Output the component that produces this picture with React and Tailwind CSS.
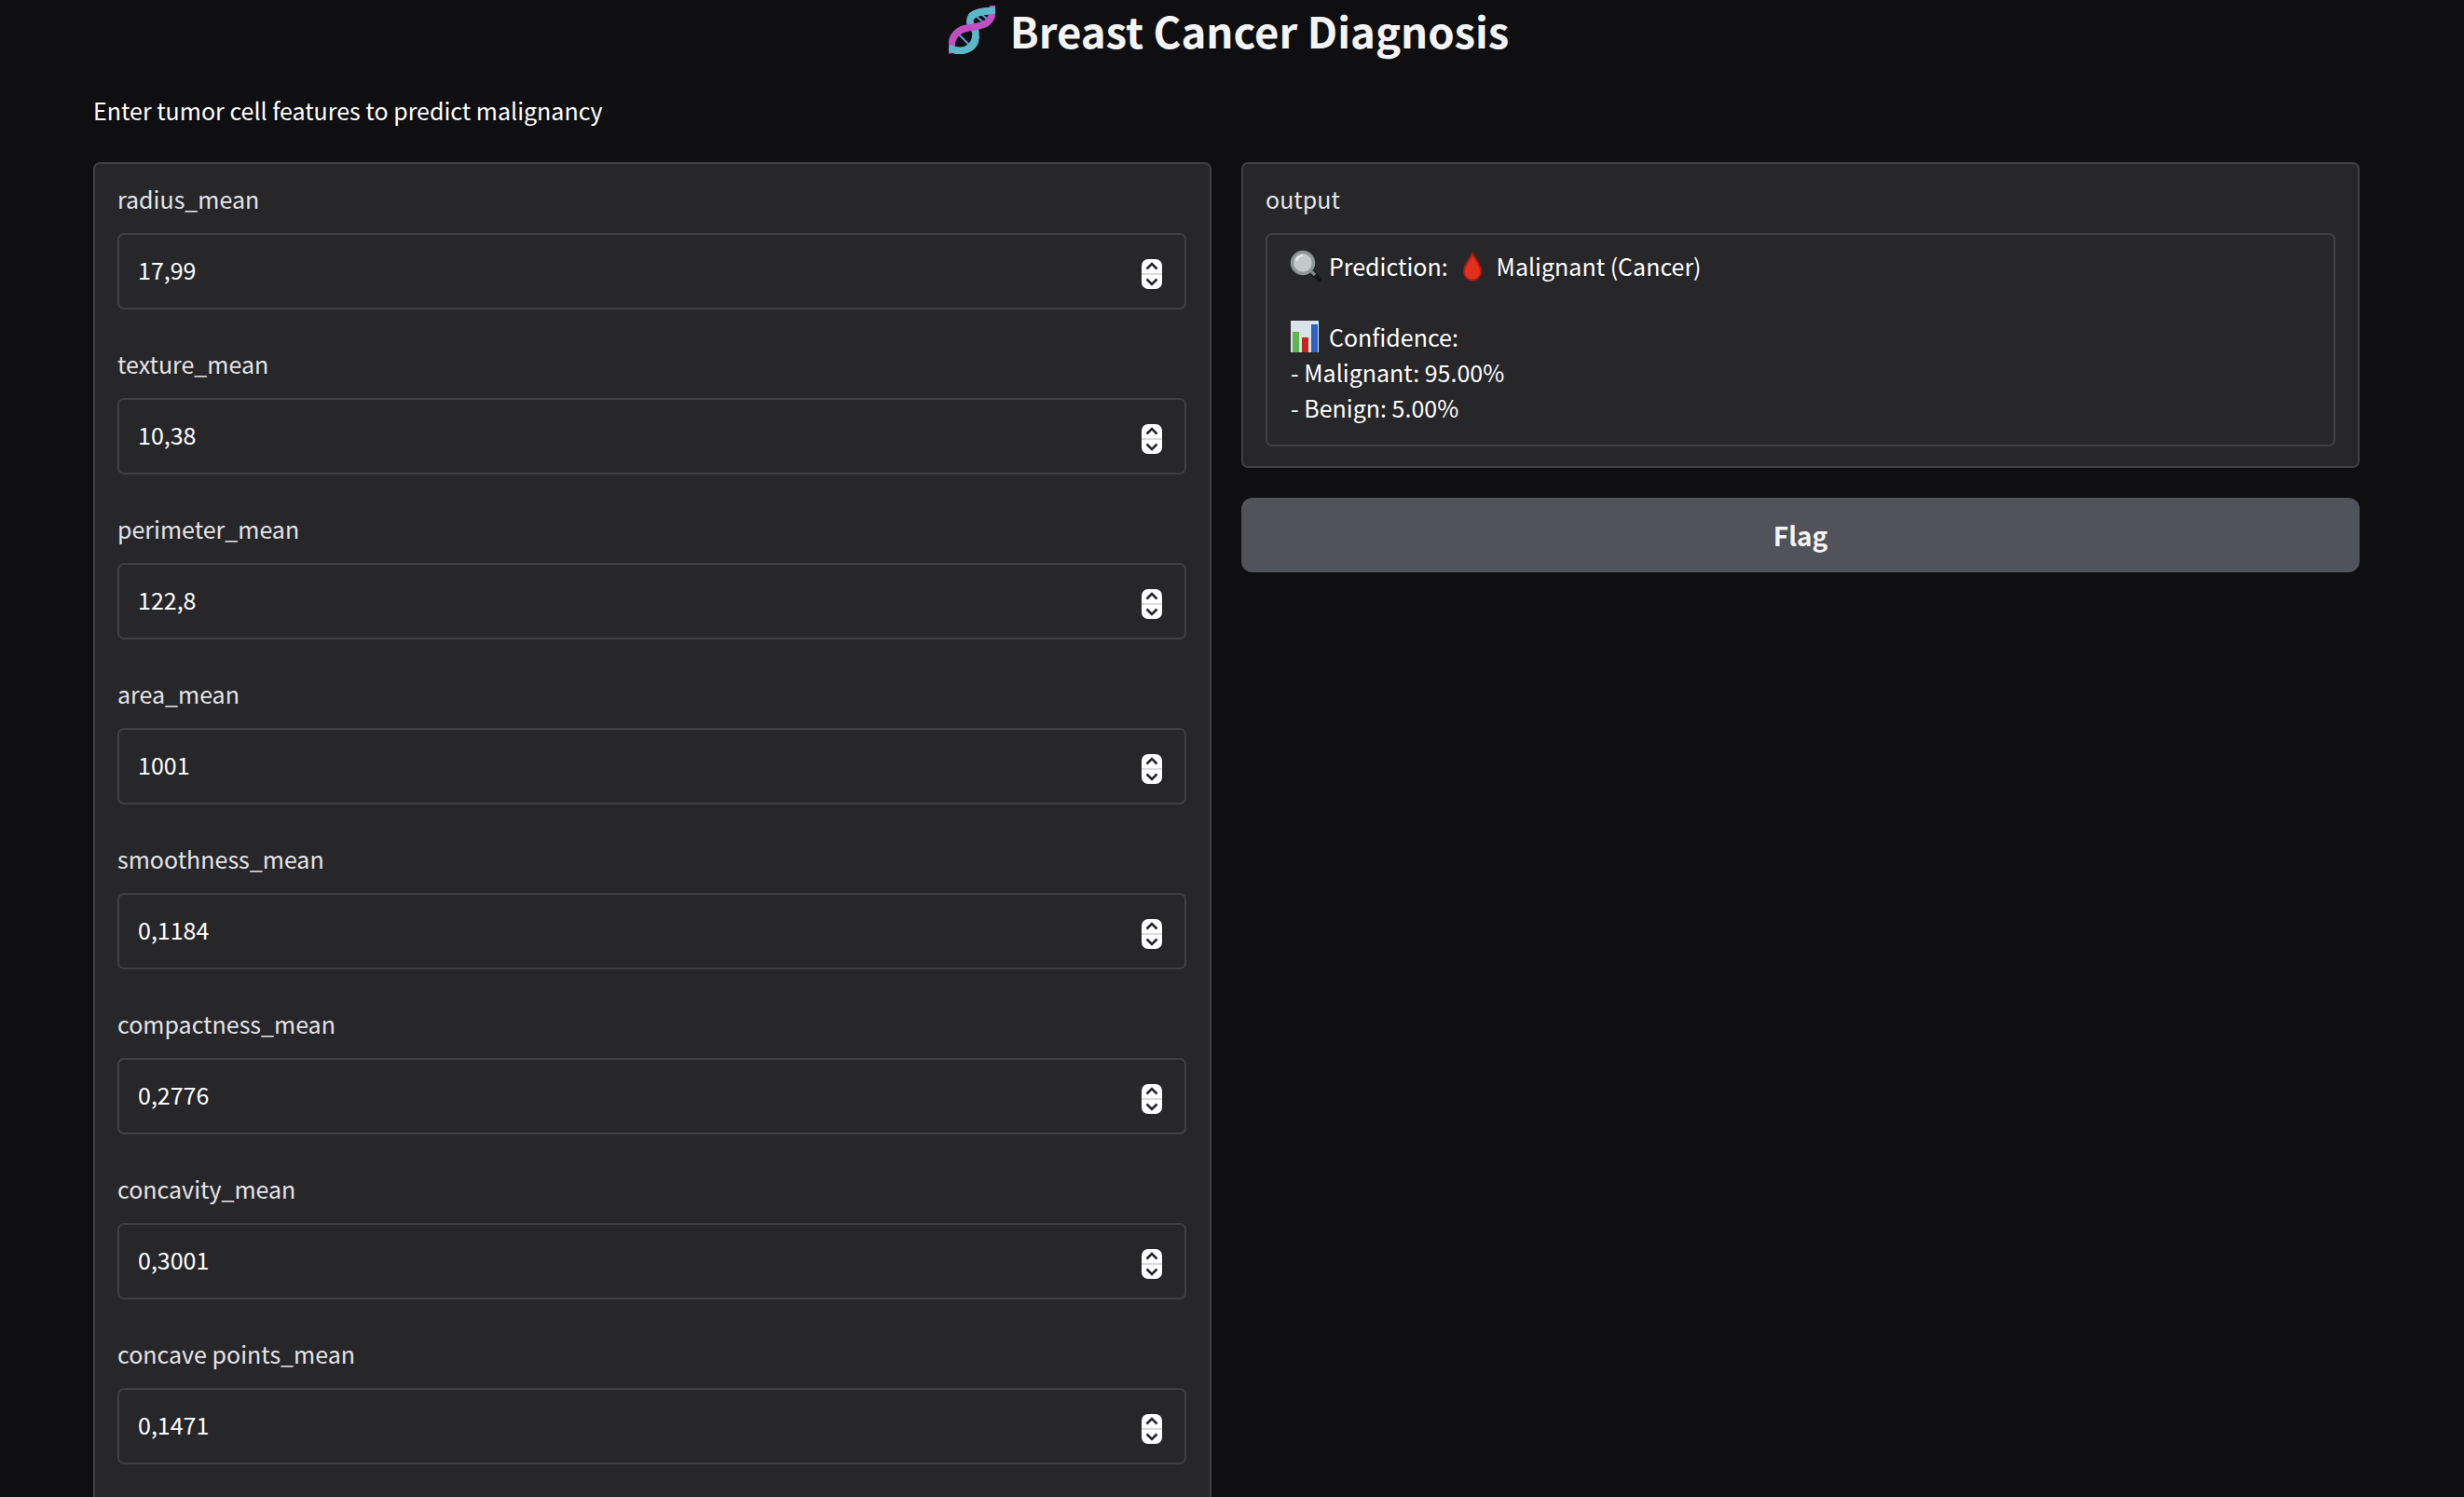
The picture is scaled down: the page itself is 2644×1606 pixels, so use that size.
import React from 'react';

const fields = [
  ['radius_mean', '17,99'],
  ['texture_mean', '10,38'],
  ['perimeter_mean', '122,8'],
  ['area_mean', '1001'],
  ['smoothness_mean', '0,1184'],
  ['compactness_mean', '0,2776'],
  ['concavity_mean', '0,3001'],
  ['concave points_mean', '0,1471'],
];

function Spinner() {
  return (
    <div className="mt-[6px] w-[22px] h-[32px] rounded-[7px] bg-white flex flex-col overflow-hidden">
      <div className="flex-1 flex items-center justify-center">
        <svg width="14" height="9" viewBox="0 0 14 9" fill="none">
          <path d="M1.5 7.5L7 2l5.5 5.5" stroke="#27272a" strokeWidth="2.6" />
        </svg>
      </div>
      <div className="h-[2px] bg-[#dcdcdc]" />
      <div className="flex-1 flex items-center justify-center">
        <svg width="14" height="9" viewBox="0 0 14 9" fill="none">
          <path d="M1.5 1.5L7 7l5.5-5.5" stroke="#27272a" strokeWidth="2.6" />
        </svg>
      </div>
    </div>
  );
}

function NumberField({ label, value }) {
  return (
    <div className="h-[177px]">
      <div className="h-[74px] pt-[19px] text-[25px] leading-[36px] text-[#e4e4e7]">{label}</div>
      <div className="h-[82px] pl-[20px] pr-[24px] flex items-center justify-between border-2 border-[#3f3f46] rounded-[7px] text-[25px] text-white">
        <span className="-mt-[2px]">{value}</span>
        <Spinner />
      </div>
    </div>
  );
}

function DnaIcon() {
  return (
    <svg width="50" height="52" viewBox="0 0 50 52" fill="none">
      <path d="M10 30l12 12M29 11l13 11M35 9l10 9" stroke="#4f9fd8" strokeWidth="2" />
      <path d="M0 45C12 52 29 48 29 30C29 22 21 22 23 15C25 7 38 6 50 5" stroke="#5cb8c9" strokeWidth="7.500" />
      <path d="M4 51C0 36 8 26 20 24C34 22 48 22 48 0" stroke="#c04fc4" strokeWidth="7.500" />
      <path d="M0 45C12 52 29 48 29 33" stroke="#5cb8c9" strokeWidth="7.500" />
      <path d="M24 12C27 7 38 6 50 5" stroke="#5cb8c9" strokeWidth="7.500" />
    </svg>
  );
}

function SearchIcon() {
  return (
    <svg width="35" height="35" viewBox="0 0 35 35" fill="none">
      <line x1="25" y1="25" x2="31.5" y2="31.5" stroke="#11181c" strokeWidth="5.5" strokeLinecap="round" />
      <line x1="23" y1="23" x2="27" y2="27" stroke="#7d8488" strokeWidth="3.5" />
      <circle cx="14" cy="14" r="11.5" fill="#c6c9cb" stroke="#8f9598" strokeWidth="3.5" />
      <path d="M7 12a8 8 0 0 1 7-6" stroke="#eceeef" strokeWidth="2" />
    </svg>
  );
}

function DropIcon() {
  return (
    <svg width="20" height="33" viewBox="0 0 20 33">
      <path d="M10 0c2 8 10 14 10 22.500a10 10 0 0 1-20 0C0 14 8 8 10 0z" fill="#b81c10" />
      <path d="M10 5c2 6 8 11 8 17.500a8 8 0 0 1-16 0C2 16 8 11 10 5z" fill="#e2301f" />
    </svg>
  );
}

function ChartIcon() {
  return (
    <svg width="30" height="34" viewBox="0 0 30 34">
      <rect width="30" height="34" fill="#dbe3e8" />
      <rect x="2" y="12" width="7" height="22" fill="#5cb84a" />
      <rect x="12" y="18" width="7" height="16" fill="#c0281c" />
      <rect x="22" y="4" width="7" height="30" fill="#2b62c4" />
    </svg>
  );
}

export default function App() {
  return (
    <div className="h-screen overflow-hidden bg-[#0f0f11] pl-[100px] pr-[112px] font-['Noto_Sans_CJK_SC','Noto_Sans',sans-serif]">
      <h1 className="h-[64px] pl-[5px] flex items-center justify-center gap-[16px] text-[45.500px] font-semibold text-[#f4f4f5]">
        <DnaIcon />
        <span>Breast Cancer Diagnosis</span>
      </h1>
      <p className="h-[110px] pt-[36px] text-[25px] leading-[36px] text-white">Enter tumor cell features to predict malignancy</p>

      <div className="grid grid-cols-2 gap-[32px] items-start">
        <div className="bg-[#27272a] border-2 border-[#3f3f46] rounded-[7px] pl-[24px] pr-[25px] pb-[40px]">
          {fields.map(([label, value]) => (
            <NumberField key={label} label={label} value={value} />
          ))}
        </div>

        <div className="flex flex-col gap-[32px]">
          <div className="h-[328px] bg-[#27272a] border-2 border-[#3f3f46] rounded-[7px] px-[24px]">
            <div className="h-[74px] pt-[19px] text-[25px] leading-[36px] text-[#e4e4e7]">output</div>
            <div className="h-[229px] border-2 border-[#3f3f46] rounded-[7px] pl-[25px] pt-[14px] text-[25px] leading-[38px] text-white">
              <div className="flex items-center h-[38px] -ml-[1px]">
                <SearchIcon />
                <span className="ml-[7px]">Prediction:</span>
                <span className="mx-[16px] flex"><DropIcon /></span>
                <span>Malignant (Cancer)</span>
              </div>
              <div className="h-[38px]" />
              <div className="flex items-center gap-[11px] h-[38px]">
                <ChartIcon />
                <span>Confidence:</span>
              </div>
              <div>- Malignant: 95.00%</div>
              <div>- Benign: 5.00%</div>
            </div>
          </div>
          <button className="h-[80px] bg-[#52525b] rounded-[12px] text-[28px] font-semibold text-[#f4f4f5]">Flag</button>
        </div>
      </div>
    </div>
  );
}
